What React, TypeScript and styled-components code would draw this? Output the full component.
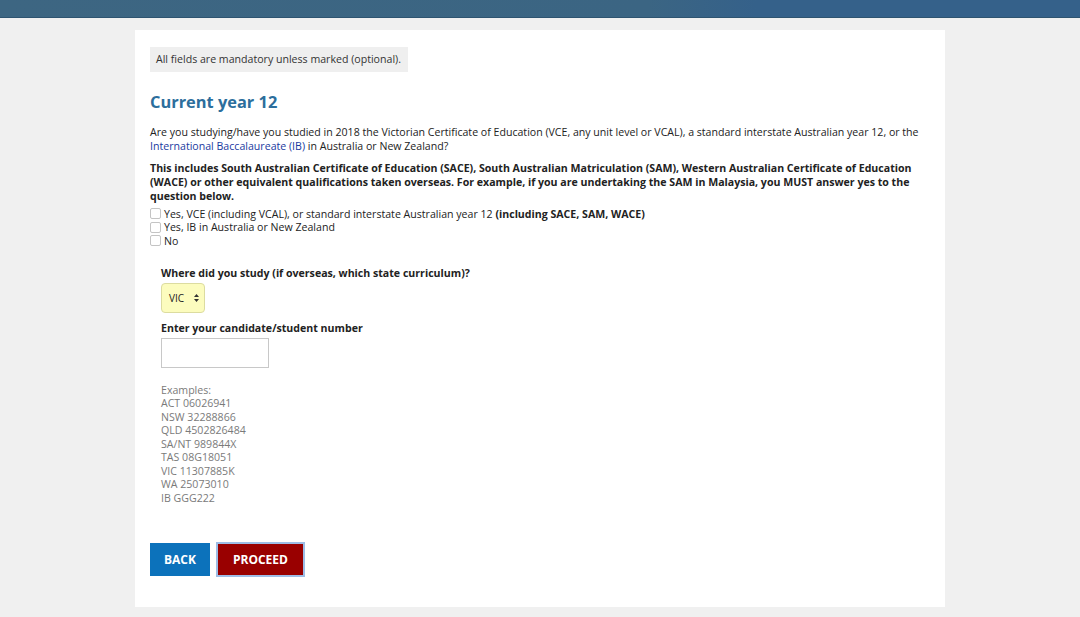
import React from "react";
import styled, { createGlobalStyle } from "styled-components";

const Global = createGlobalStyle`
  html, body { margin: 0; padding: 0; }
  body { background: #f0f0f0; font-family: "Open Sans", "Liberation Sans", sans-serif; color: #222; }
`;

const TopBar = styled.div`
  height: 17px;
  background: linear-gradient(90deg, #3d6682 0%, #3b6583 60%, #35618a 70%, #35618a 100%);
  border-bottom: 1px solid #2e5470;
`;

const Page = styled.div`
  display: flex;
  justify-content: center;
  padding-top: 12px;
  padding-bottom: 11px;
`;

const Panel = styled.main`
  width: 810px;
  background: #fff;
  box-sizing: border-box;
  padding: 17px 15px 31px 15px;
  font-size: 10.6px;
  line-height: 14px;
`;

const Notice = styled.div`
  display: inline-block;
  background: #efefef;
  color: #333;
  padding: 6px 7px 6px 6px;
  font-size: 10.6px;
  line-height: 13px;
`;

const Heading = styled.h2`
  margin: 20px 0 13px 0;
  font-size: 16.4px;
  line-height: 20px;
  font-weight: 700;
  color: #2c6e9c;
`;

const Para = styled.p<{ $bold?: boolean }>`
  margin: 0 0 ${(p) => (p.$bold ? "4px" : "8px")} 0;
  font-weight: ${(p) => (p.$bold ? 700 : 400)};
  color: #222;
`;

const Link = styled.a`
  color: #1a3aa0;
  text-decoration: none;
`;

const Options = styled.div`
  display: flex;
  flex-direction: column;
`;

const OptionRow = styled.label`
  display: flex;
  align-items: center;
  gap: 3px;
  height: 13.5px;
`;

const Box = styled.span`
  width: 11px;
  height: 11px;
  border: 1px solid #c4c4c4;
  border-radius: 2px;
  box-sizing: border-box;
  background: #fff;
`;

const Sub = styled.div`
  padding-left: 11px;
  margin-top: 18px;
  display: flex;
  flex-direction: column;
  align-items: flex-start;
`;

const FieldLabel = styled.div`
  font-weight: 700;
  margin-bottom: 3px;
`;

const SelectBox = styled.div`
  width: 44px;
  height: 30px;
  box-sizing: border-box;
  background: #fcfcbe;
  border: 1px solid #dcdca0;
  border-radius: 4px;
  display: flex;
  align-items: center;
  justify-content: space-between;
  padding: 0 5px 0 7px;
  font-size: 10px;
  margin-bottom: 8px;
`;

const Arrows = styled.svg`
  width: 5px;
  height: 8px;
`;

const TextInput = styled.div`
  width: 108px;
  height: 30px;
  box-sizing: border-box;
  border: 1px solid #c8c8c8;
  background: #fff;
  margin-bottom: 16px;
`;

const Examples = styled.div`
  color: #7a7a7a;
  display: flex;
  flex-direction: column;
  line-height: 13.5px;
`;

const Buttons = styled.div`
  display: flex;
  gap: 5px;
  margin-top: 38px;
  align-items: center;
`;

const Btn = styled.button<{ $kind: "back" | "proceed" }>`
  font-family: "Open Sans", "Liberation Sans", sans-serif;
  font-weight: 700;
  font-size: 12px;
  color: #fff;
  border: none;
  height: ${(p) => (p.$kind === "back" ? "33px" : "31px")};
  padding: 0 ${(p) => (p.$kind === "back" ? "14px" : "15px")};
  background: ${(p) => (p.$kind === "back" ? "#0c72bb" : "#990000")};
  box-shadow: ${(p) => (p.$kind === "proceed" ? "0 0 0 2px #9ebde6" : "none")};
  margin-left: ${(p) => (p.$kind === "proceed" ? "3px" : "0")};
`;

const examples = [
  "Examples:",
  "ACT 06026941",
  "NSW 32288866",
  "QLD 4502826484",
  "SA/NT 989844X",
  "TAS 08G18051",
  "VIC 11307885K",
  "WA 25073010",
  "IB GGG222",
];

export default function App() {
  return (
    <>
      <Global />
      <TopBar />
      <Page>
        <Panel>
          <Notice>All fields are mandatory unless marked (optional).</Notice>
          <Heading>Current year 12</Heading>
          <Para>
            Are you studying/have you studied in 2018 the Victorian Certificate of Education (VCE, any unit level or VCAL), a standard interstate Australian year 12, or the{" "}
            <Link>International Baccalaureate (IB)</Link> in Australia or New Zealand?
          </Para>
          <Para $bold>
            This includes South Australian Certificate of Education (SACE), South Australian Matriculation (SAM), Western Australian Certificate of Education (WACE) or other equivalent qualifications taken overseas. For example, if you are undertaking the SAM in Malaysia, you MUST answer yes to the question below.
          </Para>
          <Options>
            <OptionRow>
              <Box />
              <span>
                Yes, VCE (including VCAL), or standard interstate Australian year 12 <b>(including SACE, SAM, WACE)</b>
              </span>
            </OptionRow>
            <OptionRow>
              <Box />
              <span>Yes, IB in Australia or New Zealand</span>
            </OptionRow>
            <OptionRow>
              <Box />
              <span>No</span>
            </OptionRow>
          </Options>
          <Sub>
            <FieldLabel>Where did you study (if overseas, which state curriculum)?</FieldLabel>
            <SelectBox>
              <span>VIC</span>
              <Arrows viewBox="0 0 5 8">
                <path d="M2.5 0 L5 3 L0 3 Z M0 5 L5 5 L2.5 8 Z" fill="#333" />
              </Arrows>
            </SelectBox>
            <FieldLabel>Enter your candidate/student number</FieldLabel>
            <TextInput />
            <Examples>
              {examples.map((e) => (
                <span key={e}>{e}</span>
              ))}
            </Examples>
          </Sub>
          <Buttons>
            <Btn $kind="back">BACK</Btn>
            <Btn $kind="proceed">PROCEED</Btn>
          </Buttons>
        </Panel>
      </Page>
    </>
  );
}
